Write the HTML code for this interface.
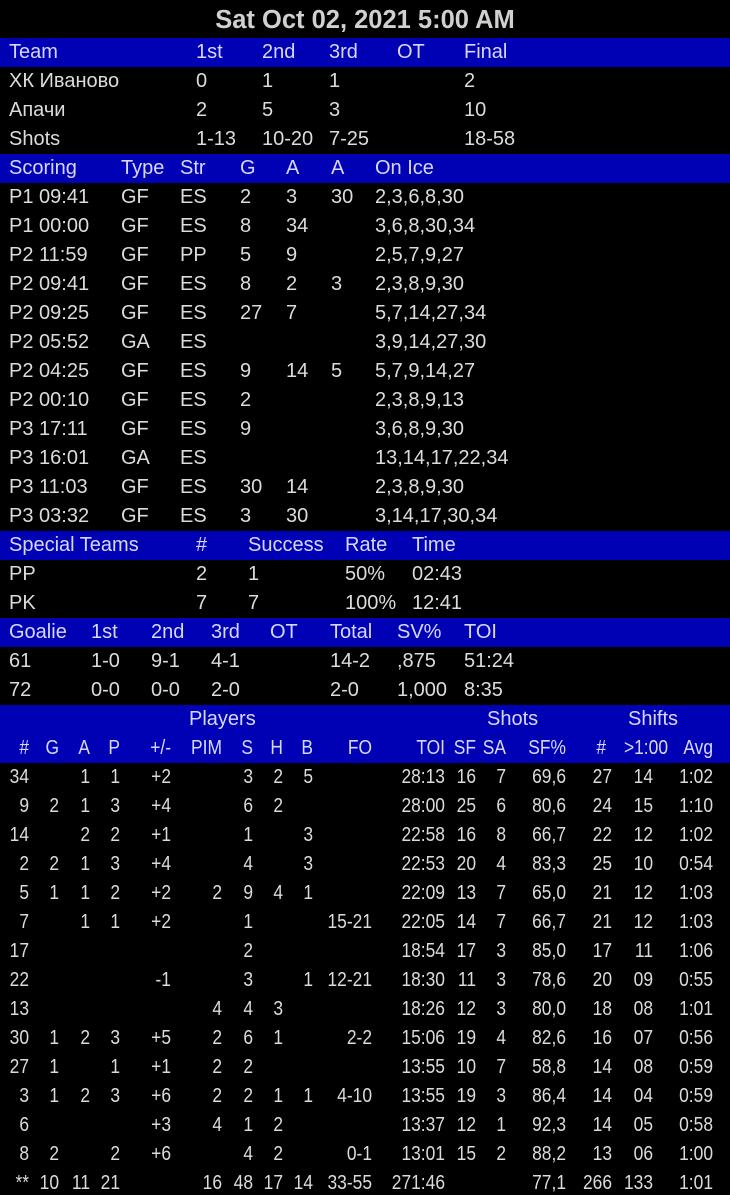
<!DOCTYPE html>
<html><head><meta charset="utf-8"><style>
html,body{margin:0;padding:0;background:#000;width:730px;height:1195px;overflow:hidden}
body{position:relative;font-family:"Liberation Sans",sans-serif;font-size:20px;color:#dcdcdc}
.t{position:absolute;left:0;top:5px;width:730px;height:29px;line-height:31px;text-align:center;font-weight:bold;font-size:25.5px;color:#d0d0d0}
.r{position:absolute;left:0;width:730px;height:29px;line-height:29px;white-space:nowrap}
.b{background:#0000b4;color:#d8d8ff}
.r span{position:absolute;top:0}
.p span{width:70px;text-align:right;transform:scaleX(0.87);transform-origin:right center}
.p0{left:-41px}.p1{left:-11px}.p2{left:20px}.p3{left:50px}.p4{left:101px}.p5{left:152px}.p6{left:183px}.p7{left:213px}.p8{left:243px}.p9{left:302px}.p10{left:375px}.p11{left:406px}.p12{left:436px}.p13{left:496px}.p14{left:542px}.p15{left:583px}.p16{left:643px}
</style></head><body>
<div class="t">Sat Oct 02, 2021 5:00 AM</div>

<div class="r b" style="top:38px"><span style="left:9px">Team</span><span style="left:196px">1st</span><span style="left:262px">2nd</span><span style="left:329px">3rd</span><span style="left:397px">OT</span><span style="left:464px">Final</span></div>
<div class="r" style="top:67px"><span style="left:9px">ХК Иваново</span><span style="left:196px">0</span><span style="left:262px">1</span><span style="left:329px">1</span><span style="left:464px">2</span></div>
<div class="r" style="top:96px"><span style="left:9px">Апачи</span><span style="left:196px">2</span><span style="left:262px">5</span><span style="left:329px">3</span><span style="left:464px">10</span></div>
<div class="r" style="top:125px"><span style="left:9px">Shots</span><span style="left:196px">1-13</span><span style="left:262px">10-20</span><span style="left:329px">7-25</span><span style="left:464px">18-58</span></div>

<div class="r b" style="top:154px"><span style="left:9px">Scoring</span><span style="left:121px">Type</span><span style="left:180px">Str</span><span style="left:240px">G</span><span style="left:286px">A</span><span style="left:331px">A</span><span style="left:375px">On Ice</span></div>
<div class="r" style="top:183px"><span style="left:9px">P1 09:41</span><span style="left:121px">GF</span><span style="left:180px">ES</span><span style="left:240px">2</span><span style="left:286px">3</span><span style="left:331px">30</span><span style="left:375px">2,3,6,8,30</span></div>
<div class="r" style="top:212px"><span style="left:9px">P1 00:00</span><span style="left:121px">GF</span><span style="left:180px">ES</span><span style="left:240px">8</span><span style="left:286px">34</span><span style="left:375px">3,6,8,30,34</span></div>
<div class="r" style="top:241px"><span style="left:9px">P2 11:59</span><span style="left:121px">GF</span><span style="left:180px">PP</span><span style="left:240px">5</span><span style="left:286px">9</span><span style="left:375px">2,5,7,9,27</span></div>
<div class="r" style="top:270px"><span style="left:9px">P2 09:41</span><span style="left:121px">GF</span><span style="left:180px">ES</span><span style="left:240px">8</span><span style="left:286px">2</span><span style="left:331px">3</span><span style="left:375px">2,3,8,9,30</span></div>
<div class="r" style="top:299px"><span style="left:9px">P2 09:25</span><span style="left:121px">GF</span><span style="left:180px">ES</span><span style="left:240px">27</span><span style="left:286px">7</span><span style="left:375px">5,7,14,27,34</span></div>
<div class="r" style="top:328px"><span style="left:9px">P2 05:52</span><span style="left:121px">GA</span><span style="left:180px">ES</span><span style="left:375px">3,9,14,27,30</span></div>
<div class="r" style="top:357px"><span style="left:9px">P2 04:25</span><span style="left:121px">GF</span><span style="left:180px">ES</span><span style="left:240px">9</span><span style="left:286px">14</span><span style="left:331px">5</span><span style="left:375px">5,7,9,14,27</span></div>
<div class="r" style="top:386px"><span style="left:9px">P2 00:10</span><span style="left:121px">GF</span><span style="left:180px">ES</span><span style="left:240px">2</span><span style="left:375px">2,3,8,9,13</span></div>
<div class="r" style="top:415px"><span style="left:9px">P3 17:11</span><span style="left:121px">GF</span><span style="left:180px">ES</span><span style="left:240px">9</span><span style="left:375px">3,6,8,9,30</span></div>
<div class="r" style="top:444px"><span style="left:9px">P3 16:01</span><span style="left:121px">GA</span><span style="left:180px">ES</span><span style="left:375px">13,14,17,22,34</span></div>
<div class="r" style="top:473px"><span style="left:9px">P3 11:03</span><span style="left:121px">GF</span><span style="left:180px">ES</span><span style="left:240px">30</span><span style="left:286px">14</span><span style="left:375px">2,3,8,9,30</span></div>
<div class="r" style="top:502px"><span style="left:9px">P3 03:32</span><span style="left:121px">GF</span><span style="left:180px">ES</span><span style="left:240px">3</span><span style="left:286px">30</span><span style="left:375px">3,14,17,30,34</span></div>

<div class="r b" style="top:531px"><span style="left:9px">Special Teams</span><span style="left:196px">#</span><span style="left:248px">Success</span><span style="left:345px">Rate</span><span style="left:412px">Time</span></div>
<div class="r" style="top:560px"><span style="left:9px">PP</span><span style="left:196px">2</span><span style="left:248px">1</span><span style="left:345px">50%</span><span style="left:412px">02:43</span></div>
<div class="r" style="top:589px"><span style="left:9px">PK</span><span style="left:196px">7</span><span style="left:248px">7</span><span style="left:345px">100%</span><span style="left:412px">12:41</span></div>

<div class="r b" style="top:618px"><span style="left:9px">Goalie</span><span style="left:91px">1st</span><span style="left:151px">2nd</span><span style="left:211px">3rd</span><span style="left:270px">OT</span><span style="left:330px">Total</span><span style="left:397px">SV%</span><span style="left:464px">TOI</span></div>
<div class="r" style="top:647px"><span style="left:9px">61</span><span style="left:91px">1-0</span><span style="left:151px">9-1</span><span style="left:211px">4-1</span><span style="left:330px">14-2</span><span style="left:397px">,875</span><span style="left:464px">51:24</span></div>
<div class="r" style="top:676px"><span style="left:9px">72</span><span style="left:91px">0-0</span><span style="left:151px">0-0</span><span style="left:211px">2-0</span><span style="left:330px">2-0</span><span style="left:397px">1,000</span><span style="left:464px">8:35</span></div>

<div class="r b" style="top:705px;height:58px"><span style="left:189px">Players</span><span style="left:487px">Shots</span><span style="left:628px">Shifts</span></div>
<div class="r p" style="top:734px;color:#d8d8ff"><span class="p0">#</span><span class="p1">G</span><span class="p2">A</span><span class="p3">P</span><span class="p4">+/-</span><span class="p5">PIM</span><span class="p6">S</span><span class="p7">H</span><span class="p8">B</span><span class="p9">FO</span><span class="p10">TOI</span><span class="p11">SF</span><span class="p12">SA</span><span class="p13">SF%</span><span style="left:536px">#</span><span style="left:598px">&gt;1:00</span><span class="p16">Avg</span></div>

<div class="r p" style="top:763px"><span class="p0">34</span><span class="p2">1</span><span class="p3">1</span><span class="p4">+2</span><span class="p6">3</span><span class="p7">2</span><span class="p8">5</span><span class="p10">28:13</span><span class="p11">16</span><span class="p12">7</span><span class="p13">69,6</span><span class="p14">27</span><span class="p15">14</span><span class="p16">1:02</span></div>
<div class="r p" style="top:792px"><span class="p0">9</span><span class="p1">2</span><span class="p2">1</span><span class="p3">3</span><span class="p4">+4</span><span class="p6">6</span><span class="p7">2</span><span class="p10">28:00</span><span class="p11">25</span><span class="p12">6</span><span class="p13">80,6</span><span class="p14">24</span><span class="p15">15</span><span class="p16">1:10</span></div>
<div class="r p" style="top:821px"><span class="p0">14</span><span class="p2">2</span><span class="p3">2</span><span class="p4">+1</span><span class="p6">1</span><span class="p8">3</span><span class="p10">22:58</span><span class="p11">16</span><span class="p12">8</span><span class="p13">66,7</span><span class="p14">22</span><span class="p15">12</span><span class="p16">1:02</span></div>
<div class="r p" style="top:850px"><span class="p0">2</span><span class="p1">2</span><span class="p2">1</span><span class="p3">3</span><span class="p4">+4</span><span class="p6">4</span><span class="p8">3</span><span class="p10">22:53</span><span class="p11">20</span><span class="p12">4</span><span class="p13">83,3</span><span class="p14">25</span><span class="p15">10</span><span class="p16">0:54</span></div>
<div class="r p" style="top:879px"><span class="p0">5</span><span class="p1">1</span><span class="p2">1</span><span class="p3">2</span><span class="p4">+2</span><span class="p5">2</span><span class="p6">9</span><span class="p7">4</span><span class="p8">1</span><span class="p10">22:09</span><span class="p11">13</span><span class="p12">7</span><span class="p13">65,0</span><span class="p14">21</span><span class="p15">12</span><span class="p16">1:03</span></div>
<div class="r p" style="top:908px"><span class="p0">7</span><span class="p2">1</span><span class="p3">1</span><span class="p4">+2</span><span class="p6">1</span><span class="p9">15-21</span><span class="p10">22:05</span><span class="p11">14</span><span class="p12">7</span><span class="p13">66,7</span><span class="p14">21</span><span class="p15">12</span><span class="p16">1:03</span></div>
<div class="r p" style="top:937px"><span class="p0">17</span><span class="p6">2</span><span class="p10">18:54</span><span class="p11">17</span><span class="p12">3</span><span class="p13">85,0</span><span class="p14">17</span><span class="p15">11</span><span class="p16">1:06</span></div>
<div class="r p" style="top:966px"><span class="p0">22</span><span class="p4">-1</span><span class="p6">3</span><span class="p8">1</span><span class="p9">12-21</span><span class="p10">18:30</span><span class="p11">11</span><span class="p12">3</span><span class="p13">78,6</span><span class="p14">20</span><span class="p15">09</span><span class="p16">0:55</span></div>
<div class="r p" style="top:995px"><span class="p0">13</span><span class="p5">4</span><span class="p6">4</span><span class="p7">3</span><span class="p10">18:26</span><span class="p11">12</span><span class="p12">3</span><span class="p13">80,0</span><span class="p14">18</span><span class="p15">08</span><span class="p16">1:01</span></div>
<div class="r p" style="top:1024px"><span class="p0">30</span><span class="p1">1</span><span class="p2">2</span><span class="p3">3</span><span class="p4">+5</span><span class="p5">2</span><span class="p6">6</span><span class="p7">1</span><span class="p9">2-2</span><span class="p10">15:06</span><span class="p11">19</span><span class="p12">4</span><span class="p13">82,6</span><span class="p14">16</span><span class="p15">07</span><span class="p16">0:56</span></div>
<div class="r p" style="top:1053px"><span class="p0">27</span><span class="p1">1</span><span class="p3">1</span><span class="p4">+1</span><span class="p5">2</span><span class="p6">2</span><span class="p10">13:55</span><span class="p11">10</span><span class="p12">7</span><span class="p13">58,8</span><span class="p14">14</span><span class="p15">08</span><span class="p16">0:59</span></div>
<div class="r p" style="top:1082px"><span class="p0">3</span><span class="p1">1</span><span class="p2">2</span><span class="p3">3</span><span class="p4">+6</span><span class="p5">2</span><span class="p6">2</span><span class="p7">1</span><span class="p8">1</span><span class="p9">4-10</span><span class="p10">13:55</span><span class="p11">19</span><span class="p12">3</span><span class="p13">86,4</span><span class="p14">14</span><span class="p15">04</span><span class="p16">0:59</span></div>
<div class="r p" style="top:1111px"><span class="p0">6</span><span class="p4">+3</span><span class="p5">4</span><span class="p6">1</span><span class="p7">2</span><span class="p10">13:37</span><span class="p11">12</span><span class="p12">1</span><span class="p13">92,3</span><span class="p14">14</span><span class="p15">05</span><span class="p16">0:58</span></div>
<div class="r p" style="top:1140px"><span class="p0">8</span><span class="p1">2</span><span class="p3">2</span><span class="p4">+6</span><span class="p6">4</span><span class="p7">2</span><span class="p9">0-1</span><span class="p10">13:01</span><span class="p11">15</span><span class="p12">2</span><span class="p13">88,2</span><span class="p14">13</span><span class="p15">06</span><span class="p16">1:00</span></div>
<div class="r p" style="top:1169px"><span class="p0">**</span><span class="p1">10</span><span class="p2">11</span><span class="p3">21</span><span class="p5">16</span><span class="p6">48</span><span class="p7">17</span><span class="p8">14</span><span class="p9">33-55</span><span class="p10">271:46</span><span class="p13">77,1</span><span class="p14">266</span><span class="p15">133</span><span class="p16">1:01</span></div>
</body></html>
